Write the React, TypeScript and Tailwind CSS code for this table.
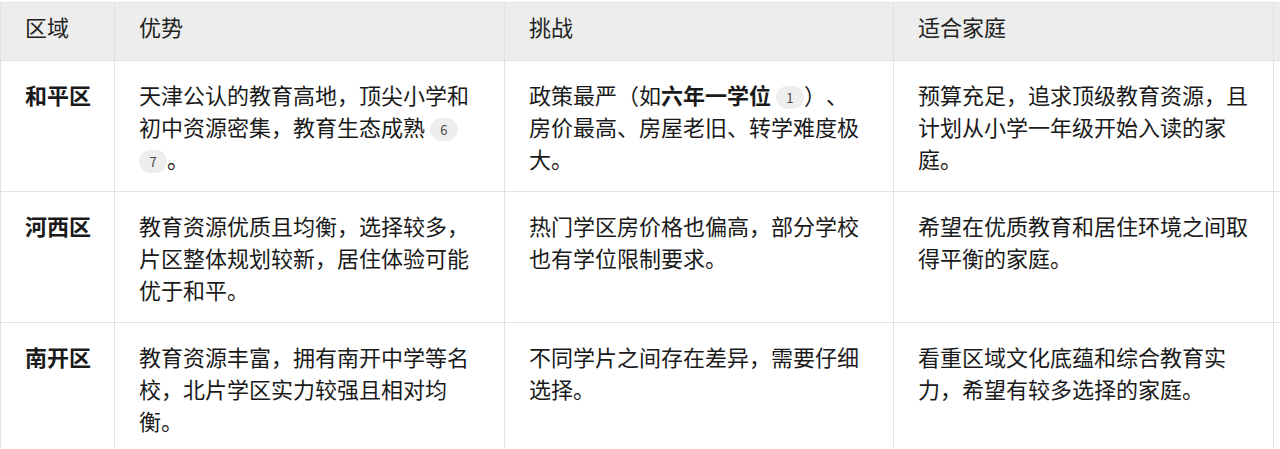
import type { ReactNode } from "react";

function Cite({ n }: { n: number }) {
  return (
    <span className="inline-flex h-[23px] w-[28px] items-center justify-center rounded-full bg-[#eeeeee] align-[1px] text-[13px] leading-none text-[#4a4a4a]">
      {n}
    </span>
  );
}

interface Row {
  area: string;
  pros: ReactNode;
  cons: ReactNode;
  fit: ReactNode;
}

const rows: Row[] = [
  {
    area: "和平区",
    pros: (
      <>
        天津公认的教育高地，顶尖小学和初中资源密集，教育生态成熟 <Cite n={6} /> <Cite n={7} />。
      </>
    ),
    cons: (
      <>
        政策最严（如<b className="font-bold">六年一学位</b> <Cite n={1} />）、房价最高、房屋老旧、转学难度极大。
      </>
    ),
    fit: "预算充足，追求顶级教育资源，且计划从小学一年级开始入读的家庭。",
  },
  {
    area: "河西区",
    pros: "教育资源优质且均衡，选择较多，片区整体规划较新，居住体验可能优于和平。",
    cons: "热门学区房价格也偏高，部分学校也有学位限制要求。",
    fit: "希望在优质教育和居住环境之间取得平衡的家庭。",
  },
  {
    area: "南开区",
    pros: "教育资源丰富，拥有南开中学等名校，北片学区实力较强且相对均衡。",
    cons: "不同学片之间存在差异，需要仔细选择。",
    fit: "看重区域文化底蕴和综合教育实力，希望有较多选择的家庭。",
  },
];

const headers = ["区域", "优势", "挑战", "适合家庭"];

export default function App() {
  return (
    <div
      className="h-[449px] w-full overflow-hidden bg-white pt-[2px] text-[#1a1a1a] [text-spacing-trim:space-all]"
      style={{ fontFamily: '"Noto Sans CJK SC", "Noto Sans", sans-serif' }}
    >
      <table className="w-[1320px] table-fixed border-collapse text-[22px] leading-[32px]">
        <colgroup>
          <col className="w-[114px]" />
          <col className="w-[390px]" />
          <col className="w-[389px]" />
          <col className="w-[380px]" />
          <col className="w-[47px]" />
        </colgroup>
        <thead>
          <tr className="bg-[#ededed]">
            {headers.map((h) => (
              <th
                key={h}
                className="whitespace-nowrap border border-[#e2e2e2] px-6 pt-[7px] pb-[18px] text-left align-top font-normal text-[#222]"
              >
                {h}
              </th>
            ))}
            <th className="border border-[#e2e2e2]" />
          </tr>
        </thead>
        <tbody>
          {rows.map((r) => (
            <tr key={r.area}>
              <td className="whitespace-nowrap border border-[#e2e2e2] pl-6 pr-2 py-[17px] align-top font-bold">
                {r.area}
              </td>
              <td className="border border-[#e2e2e2] px-6 py-[17px] align-top">{r.pros}</td>
              <td className="border border-[#e2e2e2] px-6 py-[17px] align-top">{r.cons}</td>
              <td className="border border-[#e2e2e2] pl-6 pr-5 py-[17px] align-top">{r.fit}</td>
              <td className="border border-[#e2e2e2]" />
            </tr>
          ))}
        </tbody>
      </table>
    </div>
  );
}
